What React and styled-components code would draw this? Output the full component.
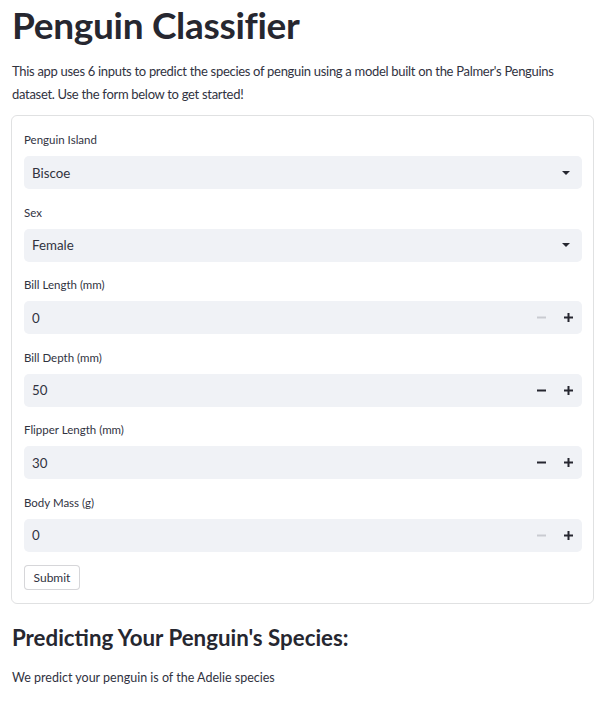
import React from "react"
import styled, { createGlobalStyle } from "styled-components"

const GlobalStyle = createGlobalStyle`
  body {
    margin: 0;
    background: #ffffff;
    color: #31333f;
    font-family: "Lato", "Noto Sans", sans-serif;
  }
`

const Page = styled.div`
  padding: 0 13px 0 11px;
`

const Title = styled.h1`
  margin: 0;
  padding: 2px 0 0 1px;
  font-size: 37px;
  line-height: 46px;
  font-weight: 700;
  color: #262730;
  letter-spacing: -0.3px;
`

const Intro = styled.p`
  margin: 12px 0 9px 1px;
  font-size: 13px;
  line-height: 23px;
  letter-spacing: -0.3px;
`

const Form = styled.form`
  border: 1px solid rgba(49, 51, 63, 0.15);
  border-radius: 6px;
  padding: 16px 11px 13px 12px;
  display: flex;
  flex-direction: column;
  gap: 15.5px;
`

const Field = styled.div`
  display: flex;
  flex-direction: column;
  gap: 8px;
`

const Label = styled.label`
  font-size: 11.5px;
  line-height: 16px;
  height: 16px;
`

const Box = styled.div`
  height: 33px;
  border-radius: 5px;
  background: #f0f2f6;
  display: flex;
  align-items: center;
  padding-left: 8px;
  font-size: 13.3px;
  color: #31333f;
`

const Value = styled.span`
  flex: 1;
`

const Caret = styled.span`
  width: 0;
  height: 0;
  margin-right: 12px;
  border-left: 4px solid transparent;
  border-right: 4px solid transparent;
  border-top: 4px solid #262730;
`

const Step = styled.span`
  width: 27px;
  display: flex;
  justify-content: center;
  align-items: center;
  color: ${(p) => (p.$disabled ? "#c9cbd1" : "#262730")};
`

const Submit = styled.button`
  align-self: flex-start;
  margin-top: -2px;
  height: 25px;
  width: 56px;
  padding: 0;
  border: 1px solid rgba(49, 51, 63, 0.2);
  border-radius: 4px;
  background: #ffffff;
  font-family: inherit;
  font-size: 12px;
  color: #31333f;
`

const Heading = styled.h2`
  margin: 18px 0 0 1px;
  font-size: 22.3px;
  line-height: 32px;
  font-weight: 700;
  color: #262730;
`

const Result = styled.p`
  margin: 14px 0 0 1px;
  font-size: 12.5px;
  line-height: 20px;
`

const Minus = ({ disabled }) => (
  <Step $disabled={disabled}>
    <svg width="9" height="9" viewBox="0 0 9 9">
      <rect x="0" y="3.5" width="9" height="2" fill="currentColor" />
    </svg>
  </Step>
)

const Plus = () => (
  <Step>
    <svg width="9" height="9" viewBox="0 0 9 9">
      <rect x="0" y="3.5" width="9" height="2" fill="currentColor" />
      <rect x="3.5" y="0" width="2" height="9" fill="currentColor" />
    </svg>
  </Step>
)

const selects = [
  { label: "Penguin Island", value: "Biscoe" },
  { label: "Sex", value: "Female" },
]

const numbers = [
  { label: "Bill Length (mm)", value: "0", min: true },
  { label: "Bill Depth (mm)", value: "50" },
  { label: "Flipper Length (mm)", value: "30" },
  { label: "Body Mass (g)", value: "0", min: true },
]

export default function App() {
  return (
    <Page>
      <GlobalStyle />
      <Title>Penguin Classifier</Title>
      <Intro>
        This app uses 6 inputs to predict the species of penguin using a model built on the
        Palmer's Penguins dataset. Use the form below to get started!
      </Intro>
      <Form onSubmit={(e) => e.preventDefault()}>
        {selects.map((s) => (
          <Field key={s.label}>
            <Label>{s.label}</Label>
            <Box>
              <Value>{s.value}</Value>
              <Caret />
            </Box>
          </Field>
        ))}
        {numbers.map((n) => (
          <Field key={n.label}>
            <Label>{n.label}</Label>
            <Box>
              <Value>{n.value}</Value>
              <Minus disabled={n.min} />
              <Plus />
            </Box>
          </Field>
        ))}
        <Submit type="submit">Submit</Submit>
      </Form>
      <Heading>Predicting Your Penguin's Species:</Heading>
      <Result>We predict your penguin is of the Adelie species</Result>
    </Page>
  )
}
